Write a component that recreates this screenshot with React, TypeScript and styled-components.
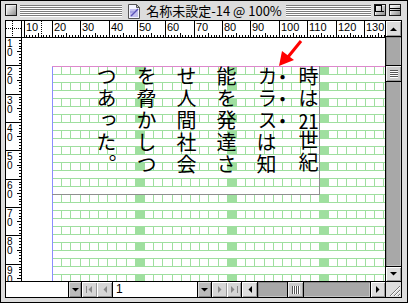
import React from "react";
import styled, { createGlobalStyle } from "styled-components";

const MM = 2.835;
const GREEN = "#9fdf9f";

const GlobalStyle = createGlobalStyle`
  html, body { margin: 0; padding: 0; background: #ffffff; }
  body { font-family: "Noto Sans CJK JP", "Noto Sans", sans-serif; }
`;

const Window = styled.div`
  width: 408px;
  height: 303px;
  box-sizing: border-box;
  border: 1px solid #000;
  background: #dddddd;
  display: flex;
  flex-direction: column;
`;

/* ---------- title bar ---------- */
const TitleBar = styled.div`
  height: 19px;
  flex: none;
  display: grid;
  grid-template-columns: 1fr auto 1fr;
`;
const TitleSide = styled.div<{ $side: "left" | "right" }>`
  display: flex;
  align-items: flex-start;
  gap: 3px;
  padding-top: 3px;
  padding-left: ${(p) => (p.$side === "left" ? "4px" : "2px")};
  padding-right: ${(p) => (p.$side === "left" ? "2px" : "6px")};
`;
const Stripes = styled.div`
  flex: 1;
  height: 12px;
  margin-top: 1px;
  background: repeating-linear-gradient(to bottom, #7c7c7c 0 1px, #ffffff 1px 2px);
`;
const TitleBox = styled.div`
  flex: none;
  width: 12px;
  height: 12px;
  box-sizing: border-box;
  border: 1px solid #1a1a1a;
  background: linear-gradient(135deg, #ffffff 0%, #d0d0d0 45%, #8c8c8c 100%);
  box-shadow: inset 1px 1px 0 #eeeeee;
  display: flex;
`;
const TitleCenter = styled.div`
  display: flex;
  align-items: center;
  gap: 4px;
  height: 19px;
  padding: 0 2px;
`;
const TitleText = styled.span`
  font-family: "Noto Sans CJK JP", sans-serif;
  font-size: 13px;
  line-height: 19px;
  color: #000;
  white-space: nowrap;
`;

/* ---------- content ---------- */
const Content = styled.div`
  flex: none;
  margin: 0 5px 4px 4px;
  border: 1px solid #000;
  display: grid;
  grid-template-columns: 16px 363px 16px;
  grid-template-rows: 17px 243px 16px;
  background: #fff;
`;
const RulerCorner = styled.div`
  box-sizing: border-box;
  border-right: 1px solid #000;
  border-bottom: 1px solid #000;
  background: #fff;
`;
const HRuler = styled.div`
  box-sizing: border-box;
  border-bottom: 1px solid #000;
  background: #fff;
`;
const VRuler = styled.div`
  box-sizing: border-box;
  border-right: 1px solid #000;
  background: #fff;
`;
const Page = styled.div`
  position: relative;
  overflow: hidden;
  background: #fff;
`;
const VScroll = styled.div`
  grid-column: 3;
  grid-row: 1 / 3;
  box-sizing: border-box;
  border-left: 1px solid #000;
  display: flex;
  flex-direction: column;
`;
const ScrollArrow = styled.div<{ $edge: "top" | "bottom" | "left" | "right"; $size: number }>`
  flex: none;
  box-sizing: border-box;
  ${(p) => (p.$edge === "top" || p.$edge === "bottom" ? `height: ${p.$size}px;` : `width: ${p.$size}px;`)}
  border-${(p) => p.$edge}: 1px solid #000;
  background: #dddddd;
  box-shadow: inset 1px 1px 0 #ffffff, inset -1px -1px 0 #999999;
  display: flex;
  align-items: center;
  justify-content: center;
`;
const Track = styled.div<{ $vertical?: boolean }>`
  flex: 1;
  display: flex;
  flex-direction: ${(p) => (p.$vertical ? "column" : "row")};
  background: #a8a8a8;
  box-shadow: inset 1px 1px 0 #888888, inset -1px -1px 0 #c4c4c4;
`;
const Thumb = styled.div<{ $vertical?: boolean; $offset: number }>`
  flex: none;
  box-sizing: border-box;
  ${(p) =>
    p.$vertical
      ? `height: 17px; margin-top: ${p.$offset}px; border-top: 1px solid #000; border-bottom: 1px solid #000;`
      : `width: 17px; margin-left: ${p.$offset}px; border-left: 1px solid #000; border-right: 1px solid #000;`}
  background: #cccccc;
  box-shadow: inset 1px 1px 0 #eeeeee, inset -1px -1px 0 #999999;
  display: flex;
  align-items: center;
  justify-content: center;
`;
const BottomBar = styled.div`
  grid-column: 1 / 3;
  grid-row: 3;
  box-sizing: border-box;
  border-top: 1px solid #000;
  display: flex;
  background: #dddddd;
`;
const GrowBox = styled.div`
  grid-column: 3;
  grid-row: 3;
  box-sizing: border-box;
  border-top: 1px solid #000;
  border-left: 1px solid #000;
  background: #dddddd;
  display: flex;
  align-items: flex-end;
  justify-content: flex-end;
`;
const Field = styled.div<{ $w: number; $divider?: boolean }>`
  flex: none;
  width: ${(p) => p.$w}px;
  box-sizing: border-box;
  background: #fff;
  ${(p) => (p.$divider ? "border-left: 1px solid #000;" : "")}
  padding-left: 3px;
  font-family: "Liberation Sans", Arial, sans-serif;
  font-size: 12px;
  line-height: 15px;
  color: #000;
`;
const PopupButton = styled.div<{ $w: number }>`
  flex: none;
  width: ${(p) => p.$w}px;
  box-sizing: border-box;
  border-left: 1px solid #000;
  border-right: 1px solid #000;
  background: #bbbbbb;
  box-shadow: inset 1px 1px 0 #dddddd, inset -1px -1px 0 #888888;
  display: flex;
  align-items: center;
  justify-content: center;
`;
const NavButton = styled.div<{ $w: number }>`
  flex: none;
  width: ${(p) => p.$w}px;
  box-sizing: border-box;
  background: #d6d6d6;
  box-shadow: inset 1px 1px 0 #ffffff, inset -1px -1px 0 #999999;
  display: flex;
  align-items: center;
  justify-content: center;
`;
const HScroll = styled.div`
  flex: 1;
  display: flex;
  box-sizing: border-box;
  border-left: 1px solid #000;
`;

/* ---------- page objects ---------- */
const TextFrame = styled.div`
  position: absolute;
  left: 30px;
  top: 28px;
  width: 268px;
  height: 129px;
  box-sizing: border-box;
  border-right: 1px solid #8f8f8f;
  border-bottom: 1px solid #8f8f8f;
  writing-mode: vertical-rl;
`;
const VerticalText = styled.p`
  margin: 0;
  margin-right: -9px;
  font-family: "Noto Sans CJK JP", sans-serif;
  font-size: 20px;
  line-height: 40px;
  letter-spacing: 2px;
  color: #000;
  white-space: nowrap;
`;
const Emphasis = styled.span`
  font-family: "Liberation Sans", "Noto Sans CJK JP", sans-serif;
  -webkit-text-emphasis: "●";
  text-emphasis: "●";
  -webkit-text-emphasis-position: over right;
  text-emphasis-position: over right;
`;
const Upright = styled.span`
  text-combine-upright: all;
`;
const Overlay = styled.svg`
  position: absolute;
  left: 0;
  top: 0;
  pointer-events: none;
`;

/* ---------- drawings ---------- */
type Dir = "up" | "down" | "left" | "right";
function Tri({ dir, color = "#000" }: { dir: Dir; color?: string }) {
  const pts: Record<Dir, string> = {
    up: "0,4 7,4 3.5,0.5",
    down: "0,0 7,0 3.5,3.5",
    left: "4,0 4,7 0.5,3.5",
    right: "0,0 0,7 3.5,3.5",
  };
  const vertical = dir === "up" || dir === "down";
  return (
    <svg width={vertical ? 7 : 4} height={vertical ? 4 : 7}>
      <polygon points={pts[dir]} fill={color} />
    </svg>
  );
}

function EndTri({ dir, color }: { dir: "first" | "last"; color: string }) {
  return (
    <svg width={7} height={7}>
      {dir === "first" ? (
        <>
          <rect x={0} y={0} width={1} height={7} fill={color} />
          <polygon points="6,0 6,7 2.5,3.5" fill={color} />
        </>
      ) : (
        <>
          <polygon points="0,0 0,7 3.5,3.5" fill={color} />
          <rect x={6} y={0} width={1} height={7} fill={color} />
        </>
      )}
    </svg>
  );
}

function Grip({ vertical }: { vertical?: boolean }) {
  const lines = [0, 2, 4, 6];
  return vertical ? (
    <svg width={8} height={8}>
      {lines.map((y) => (
        <g key={y}>
          <rect x={0} y={y} width={8} height={1} fill="#555" />
          <rect x={0} y={y + 1} width={8} height={1} fill="#fff" />
        </g>
      ))}
    </svg>
  ) : (
    <svg width={8} height={8}>
      {lines.map((x) => (
        <g key={x}>
          <rect x={x} y={0} width={1} height={8} fill="#555" />
          <rect x={x + 1} y={0} width={1} height={8} fill="#fff" />
        </g>
      ))}
    </svg>
  );
}

function DocIcon() {
  return (
    <svg width={16} height={16}>
      <polygon points="2.5,1.5 10.5,1.5 13.5,4.5 13.5,15.5 2.5,15.5" fill="#f4f4ff" stroke="#555" />
      <polygon points="10.5,1.5 10.5,4.5 13.5,4.5" fill="#ccc" stroke="#555" />
      <rect x={4} y={6} width={8} height={8} fill="#c4c0ee" />
      <line x1={5} y1={13} x2={12} y2={6} stroke="#5a50b8" strokeWidth={1.5} />
      <line x1={4} y1={9} x2={8} y2={9} stroke="#8a86d8" />
    </svg>
  );
}

function ZoomGlyph() {
  return (
    <svg width={10} height={10}>
      <rect x={0.5} y={0.5} width={6} height={6} fill="none" stroke="#000" />
      <line x1={6.5} y1={6.5} x2={9} y2={6.5} stroke="#000" />
    </svg>
  );
}
function CollapseGlyph() {
  return (
    <svg width={10} height={10}>
      <line x1={0} y1={3.5} x2={10} y2={3.5} stroke="#000" />
      <line x1={0} y1={5.5} x2={10} y2={5.5} stroke="#000" />
    </svg>
  );
}

function GrowGlyph() {
  return (
    <svg width={15} height={15}>
      {[0, 4, 8].map((o) => (
        <g key={o}>
          <line x1={4 + o} y1={14} x2={14} y2={4 + o} stroke="#777" />
          <line x1={5 + o} y1={14} x2={14} y2={5 + o} stroke="#fff" />
        </g>
      ))}
    </svg>
  );
}

const snap = (v: number) => Math.round(v) + 0.5;
const RULER_FONT = "Liberation Sans, Arial, sans-serif";

function HorizontalRulerDrawing() {
  const items: React.ReactNode[] = [];
  for (let m = 8; m <= 137; m++) {
    const x = 30 + (m - 20) * MM;
    if (x < 0 || x > 362) continue;
    const sx = snap(x);
    if (m % 10 === 0) {
      items.push(<line key={`l${m}`} x1={sx} y1={0} x2={sx} y2={16} stroke="#000" />);
      items.push(
        <text key={`t${m}`} x={Math.round(x) + 2} y={10} fontSize={11} fontFamily={RULER_FONT}>
          {m}
        </text>
      );
    } else {
      const len = m % 5 === 0 ? 4 : 2;
      items.push(<line key={`l${m}`} x1={sx} y1={16 - len} x2={sx} y2={16} stroke="#000" />);
    }
  }
  return (
    <svg width={363} height={16} style={{ display: "block" }}>
      {items}
      <line x1={19.5} y1={0} x2={19.5} y2={16} stroke="#000" strokeDasharray="1 1" />
    </svg>
  );
}

function VerticalRulerDrawing() {
  const items: React.ReactNode[] = [];
  for (let m = 10; m <= 96; m++) {
    const y = 27.35 + (m - 20) * MM;
    if (y > 243) continue;
    const sy = snap(y);
    if (m % 10 === 0) {
      items.push(<line key={`l${m}`} x1={0} y1={sy} x2={15} y2={sy} stroke="#000" />);
      const top = Math.round(y);
      items.push(
        <text key={`t${m}`} x={1} y={top + 10} fontSize={10} fontFamily={RULER_FONT}>
          {String(m / 10)}
          <tspan x={1} dy={9}>
            0
          </tspan>
        </text>
      );
    } else {
      const len = m % 5 === 0 ? 4 : 2;
      items.push(<line key={`l${m}`} x1={15 - len} y1={sy} x2={15} y2={sy} stroke="#000" />);
    }
  }
  return (
    <svg width={15} height={243} style={{ display: "block" }}>
      {items}
    </svg>
  );
}

function CornerDrawing() {
  return (
    <svg width={15} height={16} style={{ display: "block" }}>
      <line x1={6.5} y1={0} x2={6.5} y2={16} stroke="#000" strokeDasharray="1 1" />
      <line x1={0} y1={7.5} x2={15} y2={7.5} stroke="#000" strokeDasharray="1 1" />
    </svg>
  );
}

function LayoutGrid() {
  const cols: number[] = [];
  for (let c = 0; c <= 38; c++) cols.push(Math.round(30 + 9.2 * c));
  const rows: number[] = [];
  for (let r = 0; r < 14; r++) rows.push(28 + 16 * r);
  return (
    <svg width={363} height={243} style={{ display: "block" }}>
      {rows.map((y) => (
        <g key={y}>
          {cols.slice(0, -1).map((x, c) =>
            c % 10 === 9 ? <rect key={`f${c}`} x={x} y={y} width={cols[c + 1] - x} height={9} fill={GREEN} /> : null
          )}
          <line x1={30} y1={y + 0.5} x2={363} y2={y + 0.5} stroke={GREEN} />
          <line x1={30} y1={y + 8.5} x2={363} y2={y + 8.5} stroke={GREEN} />
          {cols.map((x) => (
            <line key={x} x1={x + 0.5} y1={y} x2={x + 0.5} y2={y + 9} stroke={GREEN} />
          ))}
        </g>
      ))}
      <line x1={30.5} y1={28} x2={30.5} y2={243} stroke="#8c8cff" />
      <line x1={30} y1={28.5} x2={363} y2={28.5} stroke="#dd88cc" />
    </svg>
  );
}

function RedArrow() {
  return (
    <Overlay width={363} height={243}>
      <line x1={279} y1={3} x2={266} y2={19} stroke="#ff0000" strokeWidth={3} />
      <polygon points="257,28 260,13 272,22" fill="#ff0000" />
    </Overlay>
  );
}

export default function App() {
  return (
    <>
      <GlobalStyle />
      <Window>
        <TitleBar>
          <TitleSide $side="left">
            <TitleBox />
            <Stripes />
          </TitleSide>
          <TitleCenter>
            <DocIcon />
            <TitleText>名称未設定-14 @ 100%</TitleText>
          </TitleCenter>
          <TitleSide $side="right">
            <Stripes />
            <TitleBox>
              <ZoomGlyph />
            </TitleBox>
            <TitleBox>
              <CollapseGlyph />
            </TitleBox>
          </TitleSide>
        </TitleBar>

        <Content>
          <RulerCorner>
            <CornerDrawing />
          </RulerCorner>
          <HRuler>
            <HorizontalRulerDrawing />
          </HRuler>
          <VScroll>
            <ScrollArrow $edge="bottom" $size={16}>
              <Tri dir="up" />
            </ScrollArrow>
            <Track $vertical>
              <Thumb $vertical $offset={28}>
                <Grip vertical />
              </Thumb>
            </Track>
            <ScrollArrow $edge="top" $size={15}>
              <Tri dir="down" />
            </ScrollArrow>
          </VScroll>
          <VRuler>
            <VerticalRulerDrawing />
          </VRuler>
          <Page>
            <LayoutGrid />
            <TextFrame>
              <VerticalText>
                時は<Upright>21</Upright>世紀
                <br />
                <Emphasis>カラス</Emphasis>は知
                <br />
                能を発達さ
                <br />
                せ人間社会
                <br />
                を脅かしつ
                <br />
                つあった。
              </VerticalText>
            </TextFrame>
            <RedArrow />
          </Page>
          <BottomBar>
            <Field $w={62} />
            <PopupButton $w={14}>
              <Tri dir="down" />
            </PopupButton>
            <NavButton $w={15}>
              <EndTri dir="first" color="#8a8a8a" />
            </NavButton>
            <NavButton $w={15}>
              <Tri dir="left" color="#8a8a8a" />
            </NavButton>
            <Field $w={85} $divider>
              1
            </Field>
            <PopupButton $w={15}>
              <Tri dir="down" />
            </PopupButton>
            <NavButton $w={15}>
              <Tri dir="right" color="#8a8a8a" />
            </NavButton>
            <NavButton $w={14}>
              <EndTri dir="last" color="#8a8a8a" />
            </NavButton>
            <HScroll>
              <ScrollArrow $edge="right" $size={16}>
                <Tri dir="left" />
              </ScrollArrow>
              <Track>
                <Thumb $offset={29}>
                  <Grip />
                </Thumb>
              </Track>
              <ScrollArrow $edge="left" $size={15}>
                <Tri dir="right" />
              </ScrollArrow>
            </HScroll>
          </BottomBar>
          <GrowBox>
            <GrowGlyph />
          </GrowBox>
        </Content>
      </Window>
    </>
  );
}
